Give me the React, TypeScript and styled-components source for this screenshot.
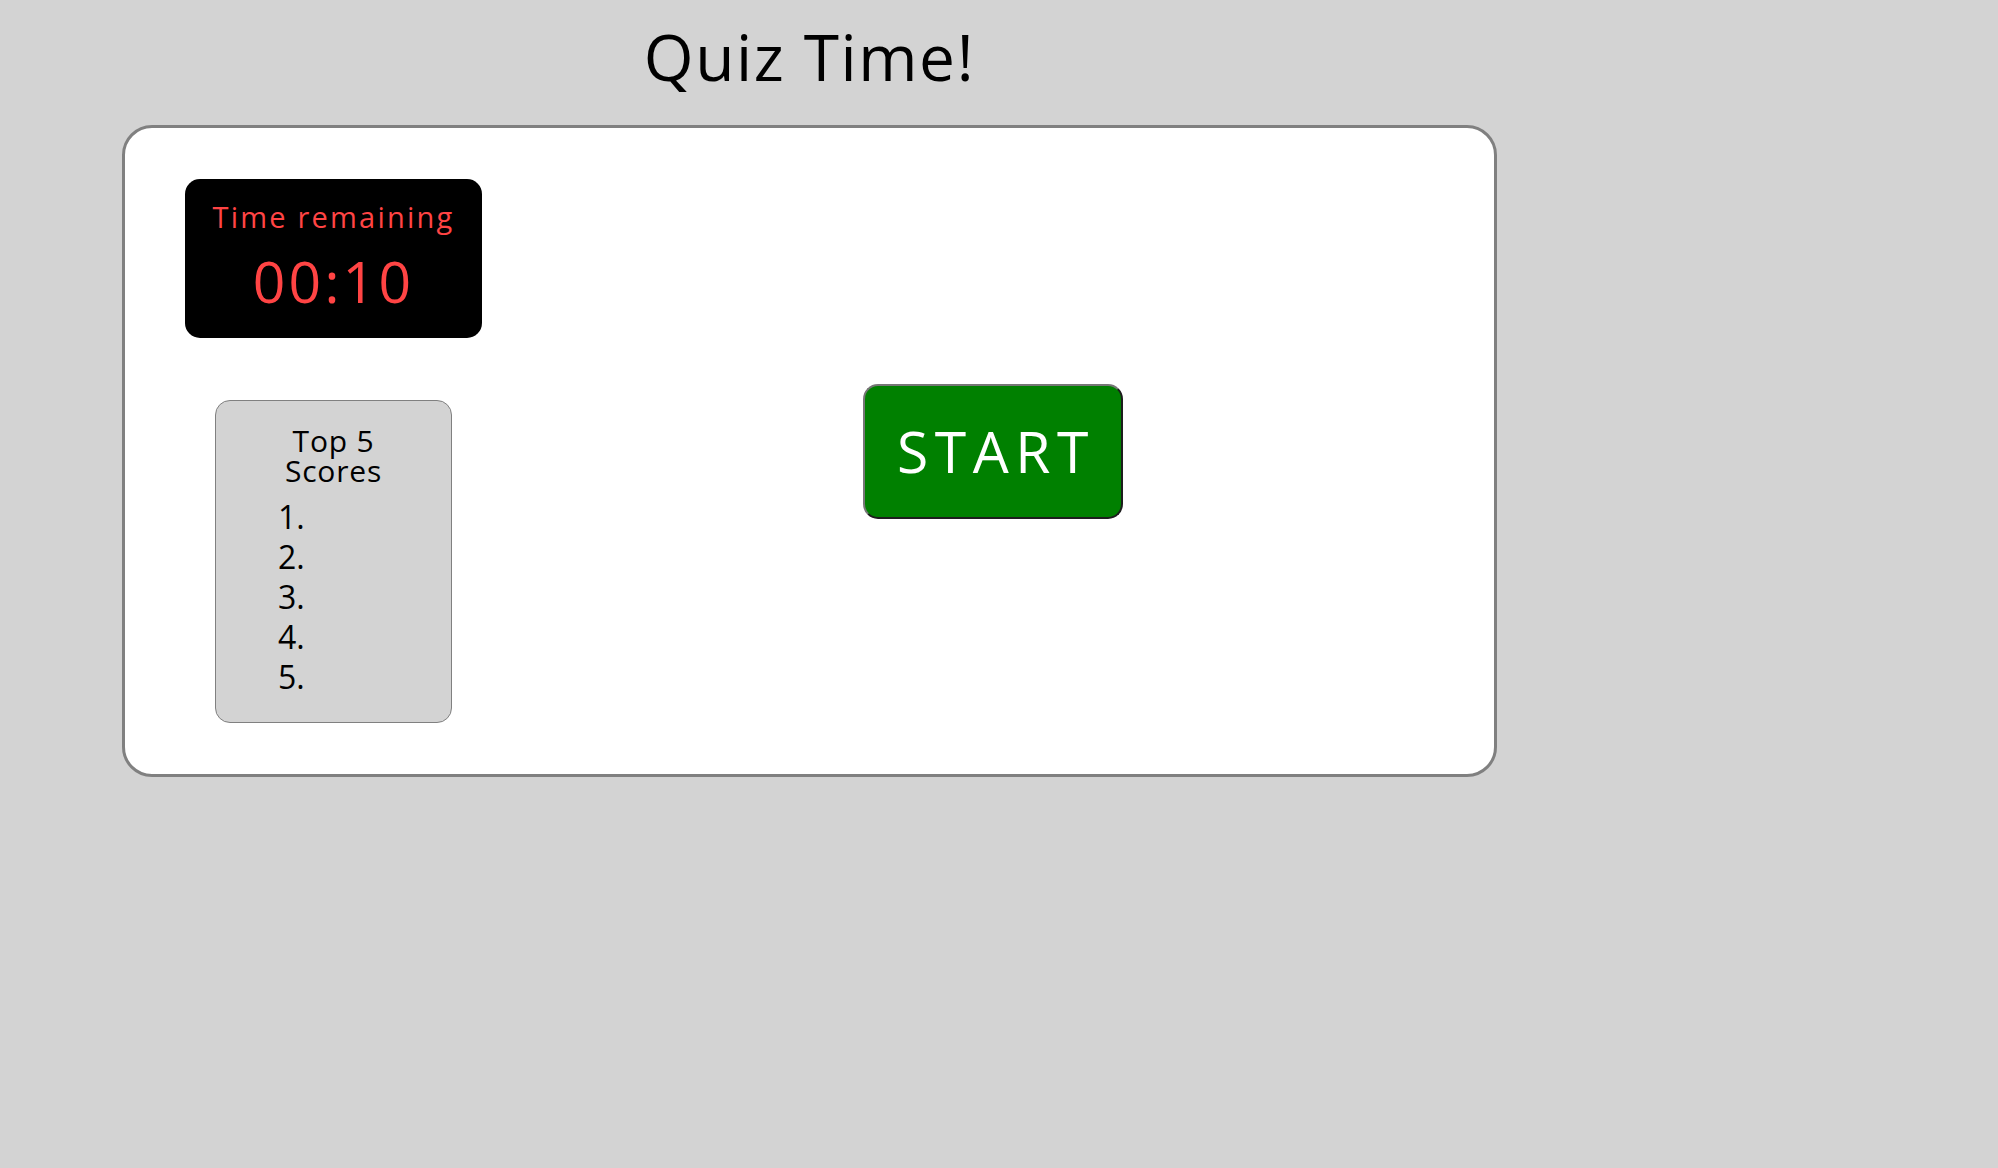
import React from "react";
import styled, { createGlobalStyle } from "styled-components";

const GlobalStyle = createGlobalStyle`
  html, body {
    margin: 0;
    padding: 0;
    background: #d3d3d3;
  }
  body {
    font-family: "Open Sans", "Liberation Sans", sans-serif;
    color: #000;
  }
`;

const Page = styled.main`
  width: 1375px;
  margin-left: 122px;
  padding-top: 25px;
`;

const Title = styled.h1`
  margin: 0 0 36px;
  font-size: 64px;
  line-height: 64px;
  font-weight: 400;
  letter-spacing: 1.6px;
  text-align: center;
`;

const Card = styled.section`
  box-sizing: border-box;
  height: 652px;
  background: #fff;
  border: 3px solid #808080;
  border-radius: 30px;
  padding: 51px 0;
  display: flex;
`;

const SideColumn = styled.div`
  padding-left: 60px;
  width: 297px;
  display: flex;
  flex-direction: column;
  align-items: center;
  gap: 62px;
`;

const Timer = styled.div`
  box-sizing: border-box;
  width: 297px;
  height: 159px;
  background: #000;
  border-radius: 15px;
  padding-top: 24px;
  display: flex;
  flex-direction: column;
  align-items: center;
  gap: 22px;
  color: #ff4444;
`;

const TimerLabel = styled.div`
  font-size: 29px;
  line-height: 28px;
  letter-spacing: 2.2px;
`;

const TimerValue = styled.div`
  font-size: 57px;
  line-height: 56px;
  letter-spacing: 3.2px;
`;

const Scores = styled.div`
  box-sizing: border-box;
  width: 237px;
  height: 323px;
  background: #d3d3d3;
  border: 1.5px solid #808080;
  border-radius: 15px;
  padding-top: 25px;
`;

const ScoresTitle = styled.h2`
  margin: 0 0 11px;
  font-size: 30px;
  line-height: 30px;
  font-weight: 400;
  text-align: center;
  letter-spacing: 0.8px;
`;

const ScoreList = styled.ol`
  margin: 0;
  padding-left: 97px;
  font-size: 32px;
  line-height: 40px;
`;

const ScoreItem = styled.li`
  height: 40px;
`;

const Stage = styled.div`
  flex: 1;
  display: flex;
  align-items: center;
  justify-content: center;
  padding-left: 10px;
`;

const StartButton = styled.button`
  box-sizing: border-box;
  width: 260px;
  height: 135px;
  background: #008000;
  color: #fff;
  border: 2px solid;
  border-color: #767676 #1d1d1d #1d1d1d #767676;
  border-radius: 15px;
  font-family: "Open Sans", "Liberation Sans", sans-serif;
  font-size: 57px;
  letter-spacing: 6.5px;
  padding: 0 0 0 6px;
  cursor: pointer;
`;

export default function App() {
  return (
    <>
      <GlobalStyle />
      <Page>
        <Title>Quiz Time!</Title>
        <Card>
          <SideColumn>
            <Timer>
              <TimerLabel>Time remaining</TimerLabel>
              <TimerValue>00:10</TimerValue>
            </Timer>
            <Scores>
              <ScoresTitle>
                Top 5
                <br />
                Scores
              </ScoresTitle>
              <ScoreList>
                {[1, 2, 3, 4, 5].map((n) => (
                  <ScoreItem key={n} />
                ))}
              </ScoreList>
            </Scores>
          </SideColumn>
          <Stage>
            <StartButton>START</StartButton>
          </Stage>
        </Card>
      </Page>
    </>
  );
}
